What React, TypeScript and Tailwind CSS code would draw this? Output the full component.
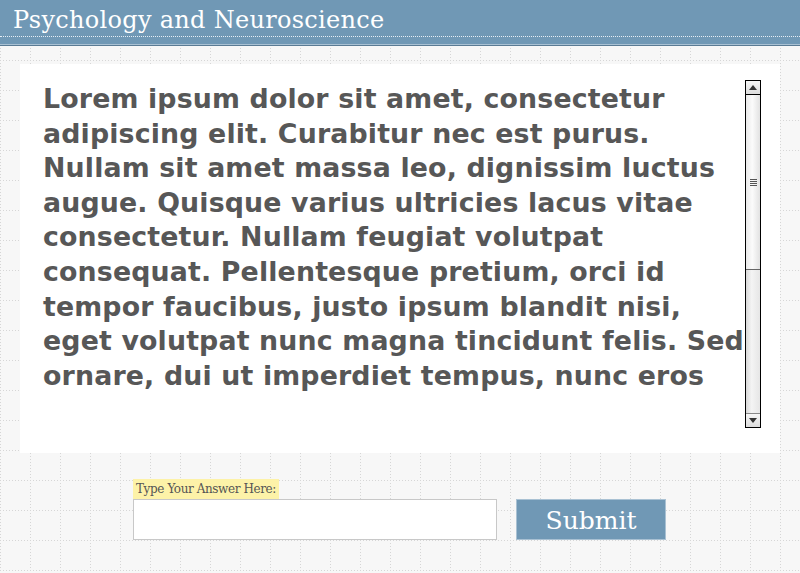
import React from "react";

function GridBg() {
  return (
    <svg className="absolute inset-0" width="800" height="573">
      <defs>
        <pattern id="g" width="30" height="30" patternUnits="userSpaceOnUse">
          <line x1="0.5" y1="0" x2="0.5" y2="30" stroke="#d6d6d6" strokeWidth="1" strokeDasharray="1 2" />
          <line x1="0" y1="0.5" x2="30" y2="0.5" stroke="#d6d6d6" strokeWidth="1" strokeDasharray="1 2" />
        </pattern>
      </defs>
      <rect width="800" height="573" fill="url(#g)" />
    </svg>
  );
}

export default function App() {
  return (
    <div className="w-[800px] h-[573px] overflow-hidden bg-[#f7f7f7] relative">
      <GridBg />
      <div className="relative">
        <div className="h-[46px] bg-[#7098b5] relative">
          <div className="absolute left-0 right-0 top-[36px] border-t border-dotted border-[#e6eef5]" />
          <div className="absolute left-0 right-0 top-[44px] h-px bg-[#a9c1d3]" />
          <div className="absolute left-0 right-0 top-[45px] h-px bg-[#5a7b94]" />
          <div className="pl-[13px] pt-[5px] text-white text-[24px] leading-[30px] font-['DejaVu_Serif',serif] tracking-[0.3px]">
            Psychology and Neuroscience
          </div>
        </div>
        <div className="mx-[20px] mt-[18px] h-[389px] bg-white flex">
          <div className="flex-1 pl-[23px] pt-[18px]">
            <p className="text-[#575757] font-bold text-[26.8px] leading-[34.6px] font-['DejaVu_Sans',sans-serif] tracking-[0.15px] whitespace-nowrap">
              Lorem ipsum dolor sit amet, consectetur<br />
              adipiscing elit. Curabitur nec est purus.<br />
              Nullam sit amet massa leo, dignissim luctus<br />
              augue. Quisque varius ultricies lacus vitae<br />
              consectetur. Nullam feugiat volutpat<br />
              consequat. Pellentesque pretium, orci id<br />
              tempor faucibus, justo ipsum blandit nisi,<br />
              eget volutpat nunc magna tincidunt felis. Sed<br />
              ornare, dui ut imperdiet tempus, nunc eros
            </p>
          </div>
          <div className="w-[16px] mt-[16px] h-[348px] mr-[19px] border border-black flex flex-col bg-[linear-gradient(90deg,#d8d8d8,#f4f4f4_40%,#e6e6e6)]">
            <div className="h-[14px] flex items-center justify-center border-b border-black bg-[linear-gradient(180deg,#f6f6f6,#dcdcdc)]">
              <div className="w-0 h-0 border-l-[4px] border-r-[4px] border-b-[5px] border-l-transparent border-r-transparent border-b-[#333]" />
            </div>
            <div className="h-[175px] border-b border-[#666] flex items-center justify-center bg-[linear-gradient(90deg,#e9e9e9,#fbfbfb_45%,#e2e2e2)]">
              <div className="flex flex-col gap-[1px]">
                <div className="w-[7px] h-px bg-[#555]" />
                <div className="w-[7px] h-px bg-[#555]" />
                <div className="w-[7px] h-px bg-[#555]" />
                <div className="w-[7px] h-px bg-[#555]" />
              </div>
            </div>
            <div className="flex-1" />
            <div className="h-[14px] flex items-center justify-center border-t border-[#888] bg-[linear-gradient(180deg,#f6f6f6,#dcdcdc)]">
              <div className="w-0 h-0 border-l-[4px] border-r-[4px] border-t-[5px] border-l-transparent border-r-transparent border-t-[#333]" />
            </div>
          </div>
        </div>
        <div className="flex pl-[133px] mt-[26px] gap-[19px]">
          <div className="flex flex-col">
            <div className="self-start bg-[#fdf2a8] px-[3px] h-[20px] leading-[21px] text-[12px] text-[#555] font-['DejaVu_Serif',serif] tracking-[-0.4px]">
              Type Your Answer Here:
            </div>
            <input className="w-[364px] h-[41px] bg-white border border-[#c8c8c8] outline-none" />
          </div>
          <button className="mt-[20px] w-[150px] h-[41px] bg-[#7098b5] border border-[#a9c1d3] text-white text-[25px] font-['DejaVu_Serif',serif] leading-none pt-[2px]">
            Submit
          </button>
        </div>
      </div>
    </div>
  );
}
